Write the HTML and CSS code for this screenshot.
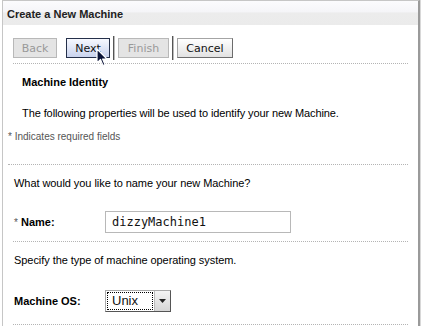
FILE: index.html
```html
<!DOCTYPE html>
<html lang="en">
<head>
    <meta charset="UTF-8">
    <title>Create a New Machine</title>
    <link rel="stylesheet" href="styles.css">
</head>
<body>
    <div class="panel">
        <div class="panel-header">Create a New Machine</div>

        <div class="toolbar">
            <button class="btn btn-back" disabled>Back</button>
            <button class="btn btn-next btn-active">Next</button>
            <span class="sep"></span>
            <button class="btn btn-finish" disabled>Finish</button>
            <span class="sep"></span>
            <button class="btn btn-cancel btn-normal">Cancel</button>

            <svg class="cursor" width="13" height="20" viewBox="0 0 13 20">
                <path d="M1 1 L1 15 L4.5 11.5 L7 17.5 L9 16.6 L6.6 11 L11 11 Z" fill="#0b1438" stroke="#fff" stroke-width="1.2" stroke-linejoin="round"/>
            </svg>
        </div>

        <div class="section section-identity">
            <h2 class="section-title">Machine Identity</h2>
            <p class="intro">The following properties will be used to identify your new Machine.</p>
            <p class="required-note">* Indicates required fields</p>
        </div>

        <div class="section section-name">
            <p class="question">What would you like to name your new Machine?</p>
            <div class="field-row">
                <label class="field-label" for="machineName"><span class="star">*</span> Name:</label>
                <input class="text-input" type="text" id="machineName" value="dizzyMachine1">
            </div>
        </div>

        <div class="section section-os">
            <p class="question">Specify the type of machine operating system.</p>
            <div class="field-row field-row-os">
                <span class="field-label">Machine OS:</span>
                <div class="fake-select">
                    <span class="fake-select-value">Unix</span>
                    <span class="fake-select-arrow">
                        <svg width="7" height="4" viewBox="0 0 7 4"><path d="M0 0 L7 0 L3.5 4 Z" fill="#222"/></svg>
                    </span>
                </div>
            </div>
        </div>
    </div>
</body>
</html>
```

FILE: styles.css
```css
/* Wizard panel */
body {
    margin: 0;
    background-color: #fff;
    font-family: 'Liberation Sans', Arial, sans-serif;
    font-size: 11px;
    color: #000;
}

.panel {
    position: relative;
    margin-left: 2px;
    width: 415px;
    height: 330px;
    border: 1px solid #c6c6c6;
    border-right: 2px solid #9a9a9a;
    box-shadow: 1px 0 0 #d8d8d8;
    background-color: #fff;
}

.panel-header {
    height: 24px;
    line-height: 26px;
    padding-left: 4px;
    font-size: 11px;
    font-weight: bold;
    color: #222;
    background: linear-gradient(#fbfbfd 0, #f5f5f8 45%, #ececec 50%, #ebebeb 100%);
}

/* Toolbar */
.toolbar {
    position: relative;
    display: flex;
    align-items: flex-end;
    height: 33px;
    padding: 0 0 5px 0;
    margin: 0 10px 0 10px;
    border-bottom: 1px dotted #b4b4b4;
}

.btn {
    height: 20px;
    margin: 0 9px 0 0;
    padding: 0;
    font-family: 'DejaVu Sans', sans-serif;
    font-size: 11px;
    border: 1px solid #b8b8b8;
    background-color: #e4e4e4;
    color: #999;
}

.btn-back,
.btn-next {
    width: 44px;
}

.btn-next {
    margin-right: 3px;
}

.btn-finish {
    width: 51px;
    margin-right: 3px;
}

.btn-cancel {
    width: 56px;
}

.btn-active {
    color: #111;
    border: 1px solid #25304a;
    background: linear-gradient(#f6f8fe, #c9d3ee);
}

.btn-normal {
    color: #111;
    border: 1px solid #a4a4a4;
    border-right-color: #6c6c6c;
    border-bottom-color: #6c6c6c;
    background: linear-gradient(#ffffff, #e2e2e2);
}

.sep {
    width: 1px;
    height: 24px;
    margin: 0 4px -2px 0;
    background-color: #555;
    box-shadow: 1px 0 0 #bbb;
}

.cursor {
    position: absolute;
    left: 83px;
    top: 23px;
}

/* Sections */
.section {
    margin: 0 10px 0 5px;
    border-bottom: 1px dotted #b4b4b4;
}

.section-identity {
    height: 100px;
}

.section-title {
    margin: 0;
    padding: 12px 0 0 14px;
    font-size: 11px;
    font-weight: bold;
}

.intro {
    margin: 19px 0 0 14px;
    letter-spacing: -0.09px;
}

.required-note {
    margin: 12px 0 0 0;
    font-size: 10px;
    color: #555;
}

.section-name,
.section-os {
    margin-left: 10px;
    height: 76px;
}

.section-os {
    height: 82px;
}

.question {
    margin: 0;
    padding: 12px 0 0 1px;
    letter-spacing: -0.06px;
}

.field-row {
    display: flex;
    align-items: center;
    margin-top: 22px;
}

.field-row-os {
    margin-top: 24px;
}

.field-label {
    width: 92px;
    padding-left: 1px;
    font-weight: bold;
}

.star {
    font-weight: normal;
    color: #555;
    font-size: 10px;
}

.text-input {
    width: 186px;
    height: 22px;
    box-sizing: border-box;
    margin: 0 0 0 -1px;
    padding: 0 6px;
    border: 1px solid #b8b8b8;
    font-family: 'DejaVu Sans Mono', monospace;
    font-size: 12px;
    color: #111;
}

.fake-select {
    display: flex;
    width: 66px;
    height: 22px;
    margin-left: -1px;
    box-sizing: border-box;
    border: 1px solid #a8a8a8;
    border-right-color: #555;
    border-bottom-color: #555;
    background-color: #fff;
}

.fake-select-value {
    flex: 1;
    margin: 1px;
    padding-left: 5px;
    line-height: 18px;
    outline: 1px dotted #000;
    outline-offset: -1px;
    font-family: 'Liberation Sans', sans-serif;
    font-size: 13px;
    color: #111;
}

.fake-select-arrow {
    display: flex;
    align-items: center;
    justify-content: center;
    width: 15px;
    border-left: 1px solid #bbb;
    background: linear-gradient(#f4f4f4, #d6d6d6);
}
```
